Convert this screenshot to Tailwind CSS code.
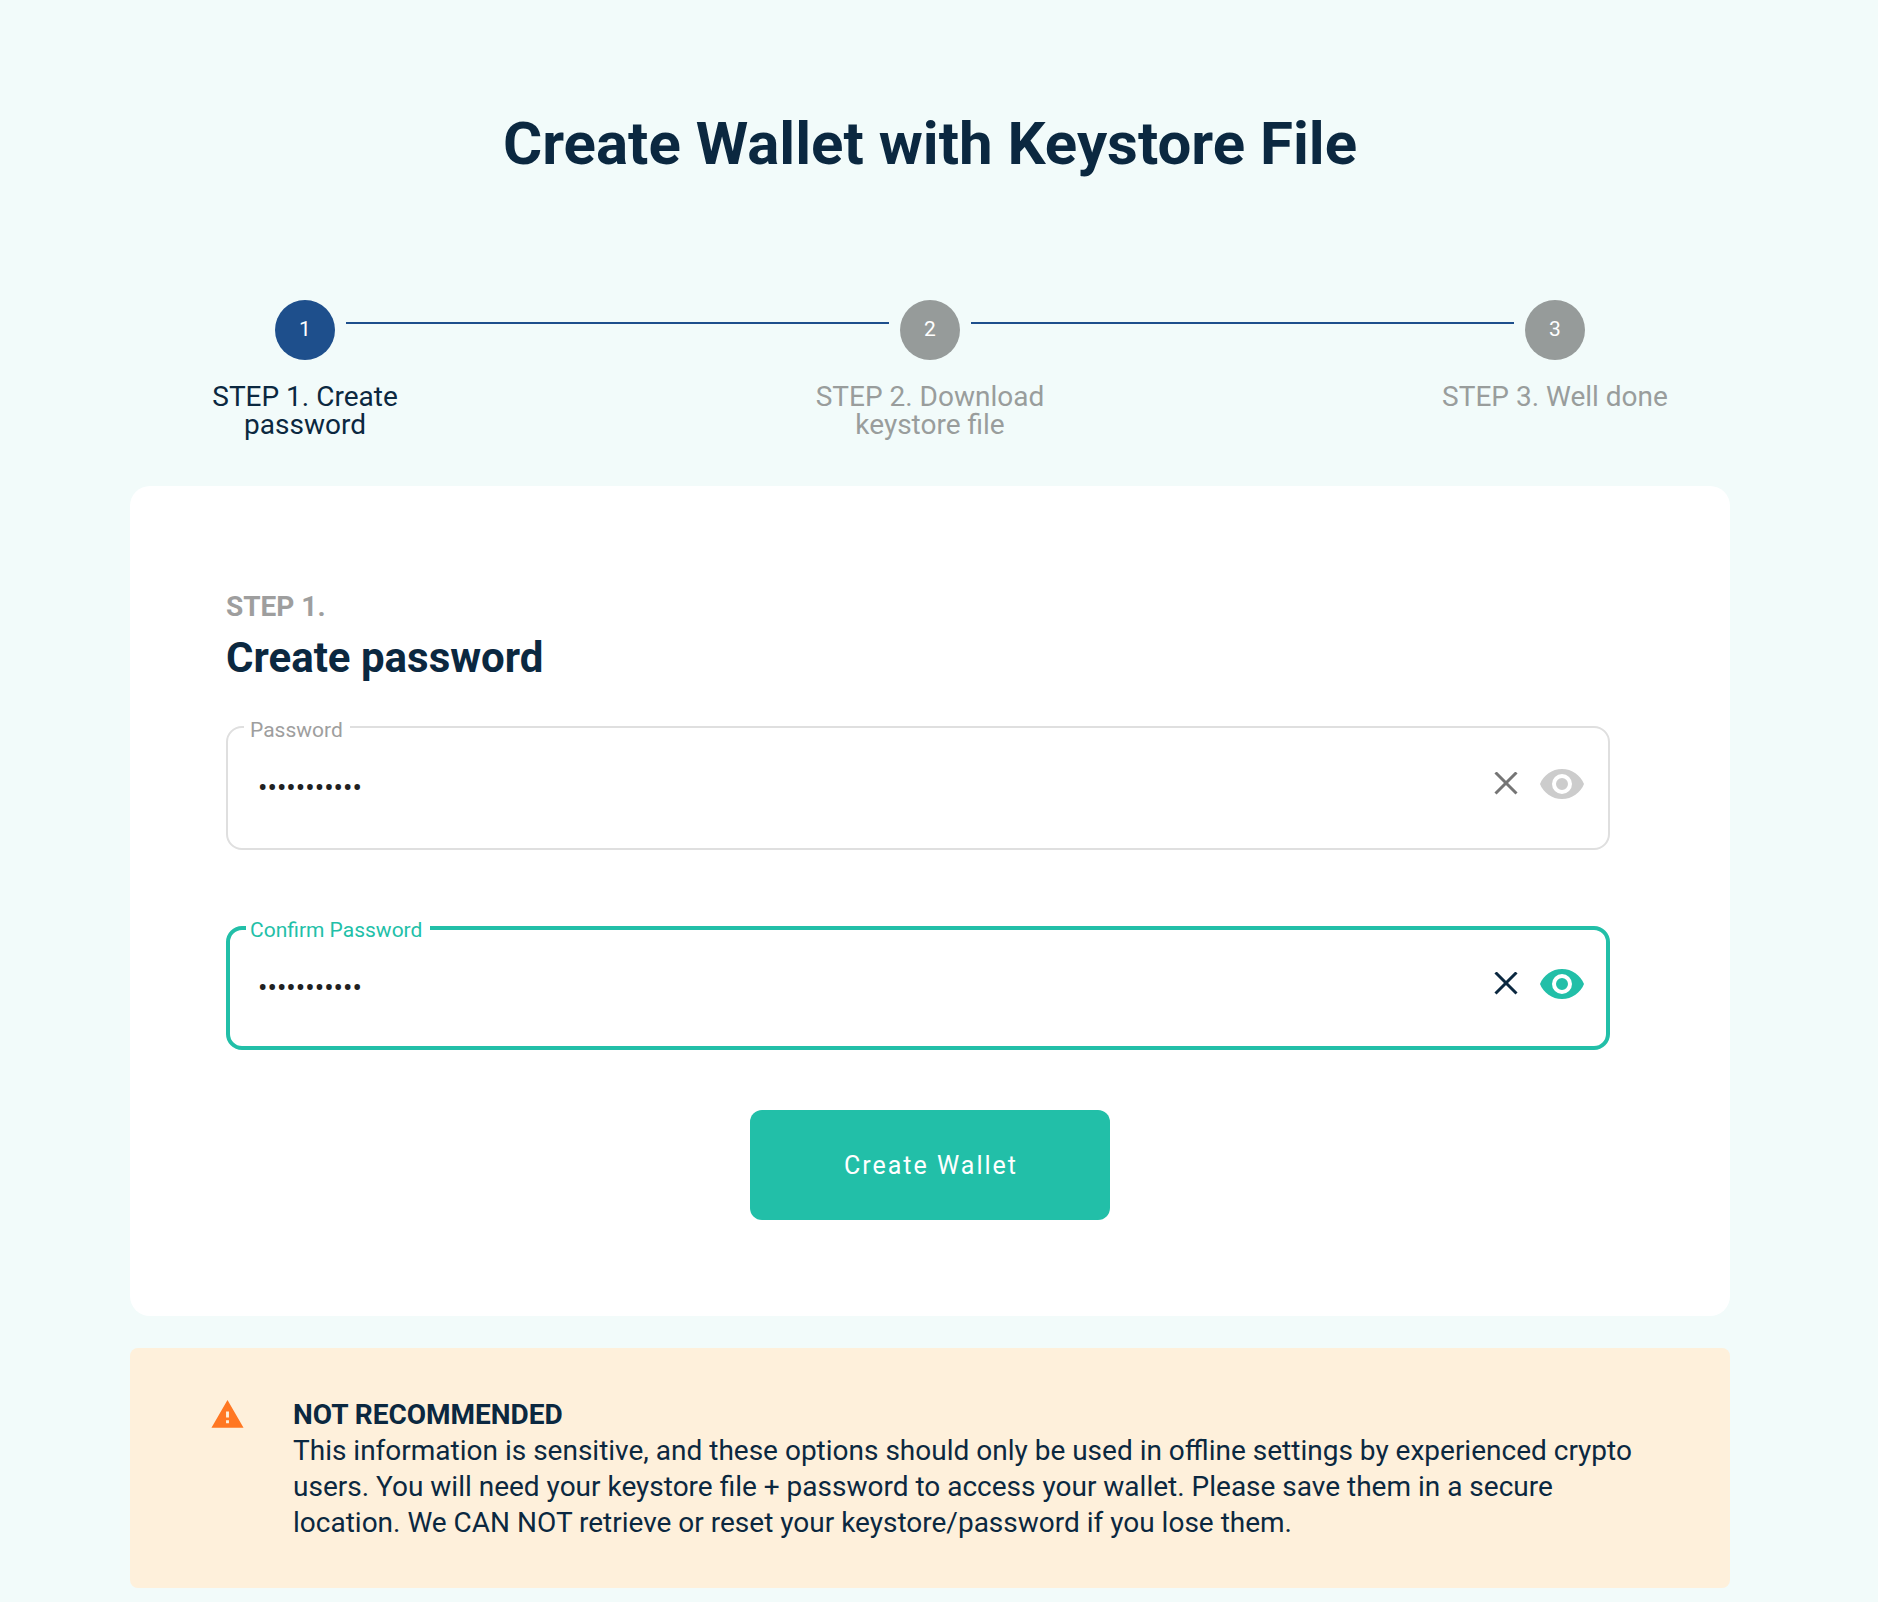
<!DOCTYPE html>
<html lang="en">
<head>
<meta charset="utf-8">
<meta name="viewport" content="width=device-width, initial-scale=1">
<title>Create Wallet with Keystore File</title>
<script src="https://cdn.jsdelivr.net/npm/@tailwindcss/browser@4"></script>
</head>
<body class="min-h-screen bg-[#f2fbfa] font-[Roboto,sans-serif] text-[#0b2840]">
<main class="pt-[108px] pr-[148px] pb-3 pl-[130px]">
  <h1 class="text-center text-[60px] leading-[72px] font-bold">Create Wallet with Keystore File</h1>

  <!-- Progress -->
  <ol class="mt-[120px] flex items-start text-center text-[28px] leading-7">
    <li class="flex w-[350px] shrink-0 flex-col items-center gap-[23px] px-12" aria-current="step">
      <span class="flex size-[60px] items-center justify-center rounded-full bg-[#1e4f8c] pb-[2px] text-[21px] text-white">1</span>
      <span>STEP 1. Create password</span>
    </li>
    <li class="-mx-[134px] mt-[22px] h-[2px] flex-1 bg-[#1e4f8c]" role="presentation"></li>
    <li class="flex w-[350px] shrink-0 flex-col items-center gap-[23px] px-12">
      <span class="flex size-[60px] items-center justify-center rounded-full bg-[#969b9a] pb-[2px] text-[21px] text-white">2</span>
      <span class="text-[#999d9c]">STEP 2. Download keystore file</span>
    </li>
    <li class="-mx-[134px] mt-[22px] h-[2px] flex-1 bg-[#1e4f8c]" role="presentation"></li>
    <li class="flex w-[350px] shrink-0 flex-col items-center gap-[23px] px-12">
      <span class="flex size-[60px] items-center justify-center rounded-full bg-[#969b9a] pb-[2px] text-[21px] text-white">3</span>
      <span class="whitespace-nowrap text-[#999d9c]">STEP 3. Well done</span>
    </li>
  </ol>

  <!-- Password form -->
  <form class="mt-[47px] rounded-[20px] bg-white px-24 pt-[101px] pb-24">
    <p class="text-[28px] leading-10 font-bold text-[#9e9e9e]">STEP 1.</p>
    <h2 class="mt-[7px] text-[42px] leading-[48px] font-bold">Create password</h2>

    <div class="relative mt-11 mr-6 flex h-[124px] items-start rounded-2xl border-2 border-[#dfdfdf] pt-8 pr-[22px] pl-[30px]">
      <label for="password" class="absolute -top-3 left-4 bg-white pr-[7px] pl-[6px] text-[21px] leading-7 text-[#9e9e9e]">Password</label>
      <input id="password" type="password" value="keystore123" class="h-[54px] min-w-0 flex-1 bg-transparent text-[28px] text-[#212121] outline-none">
      <button type="button" aria-label="Clear password" class="flex size-12 items-center justify-center text-[#757575]">
        <svg class="size-6" viewBox="0 0 24 24" fill="none" stroke="currentColor" stroke-width="3"><path d="M1.5 .5l21 21M22.500 .5l-21 21"/></svg>
      </button>
      <button type="button" aria-label="Show password" class="ml-2 size-12 text-[#cccccc]">
        <svg class="size-12" viewBox="0 0 24 24" fill="currentColor"><path d="M12,9A3,3 0 0,0 9,12A3,3 0 0,0 12,15A3,3 0 0,0 15,12A3,3 0 0,0 12,9M12,17A5,5 0 0,1 7,12A5,5 0 0,1 12,7A5,5 0 0,1 17,12A5,5 0 0,1 12,17M12,4.5C7,4.5 2.730,7.610 1,12C2.730,16.390 7,19.500 12,19.500C17,19.500 21.270,16.390 23,12C21.270,7.610 17,4.500 12,4.500Z"/></svg>
      </button>
    </div>

    <div class="relative mt-[76px] mr-6 flex h-[124px] items-start rounded-2xl border-4 border-[#22bfa8] pt-[30px] pr-5 pl-7">
      <label for="confirm" class="absolute -top-[14px] left-4 bg-white pr-2 pl-1 text-[21px] leading-7 text-[#22bfa8]">Confirm Password</label>
      <input id="confirm" type="password" value="keystore123" class="h-[54px] min-w-0 flex-1 bg-transparent text-[28px] text-[#212121] outline-none">
      <button type="button" aria-label="Clear confirmation" class="flex size-12 items-center justify-center text-[#0b2840]">
        <svg class="size-6" viewBox="0 0 24 24" fill="none" stroke="currentColor" stroke-width="3"><path d="M1.5 .5l21 21M22.500 .5l-21 21"/></svg>
      </button>
      <button type="button" aria-label="Show confirmation" class="ml-2 size-12 text-[#22bfa8]">
        <svg class="size-12" viewBox="0 0 24 24" fill="currentColor"><path d="M12,9A3,3 0 0,0 9,12A3,3 0 0,0 12,15A3,3 0 0,0 15,12A3,3 0 0,0 12,9M12,17A5,5 0 0,1 7,12A5,5 0 0,1 12,7A5,5 0 0,1 17,12A5,5 0 0,1 12,17M12,4.5C7,4.5 2.730,7.610 1,12C2.730,16.390 7,19.500 12,19.500C17,19.500 21.270,16.390 23,12C21.270,7.610 17,4.500 12,4.500Z"/></svg>
      </button>
    </div>

    <button type="submit" class="mx-auto mt-[60px] block h-[110px] w-[360px] rounded-xl bg-[#22bfa8] pt-[2px] pl-[2px] text-[25px] tracking-[2px] text-white">Create Wallet</button>
  </form>

  <!-- Warning -->
  <section class="mt-8 flex items-start gap-12 rounded-lg bg-[#fef0db] px-20 pt-[49px] pb-[47px]">
    <svg class="size-[35px] shrink-0 text-[#ff7722]" viewBox="0 0 24 24" fill="currentColor" aria-hidden="true"><path d="M13,14H11V10H13M13,18H11V16H13M1,21H23L12,2L1,21Z"/></svg>
    <div class="text-[28px] leading-9">
      <h3 class="font-bold">NOT RECOMMENDED</h3>
      <p>This information is sensitive, and these options should only be used in offline settings by experienced crypto users. You will need your keystore file + password to access your wallet. Please save them in a secure location. We CAN NOT retrieve or reset your keystore/password if you lose them.</p>
    </div>
  </section>
</main>
</body>
</html>
